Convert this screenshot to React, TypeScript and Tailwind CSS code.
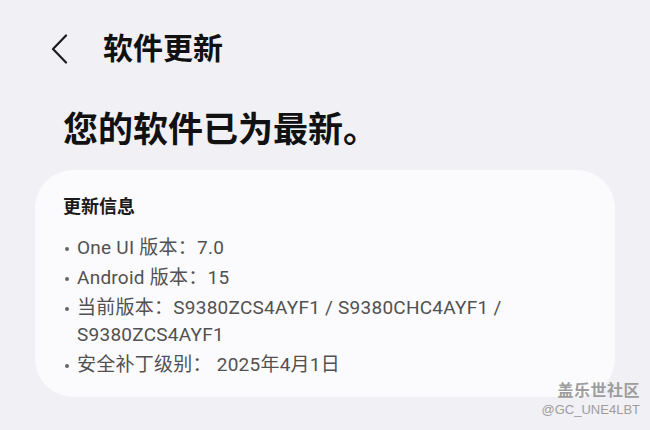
import React from 'react';

// Info rows shown inside the card
const infoRows: string[][] = [
  ['One UI 版本：7.0'],
  ['Android 版本：15'],
  ['当前版本：S9380ZCS4AYF1 / S9380CHC4AYF1 /', 'S9380ZCS4AYF1'],
  ['安全补丁级别： 2025年4月1日'],
];

function BackChevron() {
  return (
    <svg width="18" height="30" viewBox="0 0 18 30" fill="none">
      <path d="M16 1.5 L3 15 L16 28.5" stroke="#1c1c1e" strokeWidth="2.2" strokeLinecap="round" strokeLinejoin="round" />
    </svg>
  );
}

export default function App() {
  return (
    <div
      className="relative w-[650px] h-[430px] overflow-hidden bg-[#f0f0f5]"
      style={{ fontFamily: 'Roboto, "Noto Sans CJK SC", sans-serif' }}
    >
      {/* Top bar */}
      <div className="flex items-center pl-[50px] pt-[34px]">
        <BackChevron />
        <h1 className="ml-[35px] text-[30px] leading-[30px] font-bold text-[#111]">软件更新</h1>
      </div>

      {/* Status headline */}
      <h2 className="mt-[49px] ml-[63px] text-[35px] leading-[35px] font-bold text-[#111]">
        您的软件已为最新。
      </h2>

      {/* Update info card */}
      <div className="mt-[22px] ml-[35px] w-[580px] rounded-[38px] bg-[#fbfbfd] pt-[28px] pl-[28px] pr-[24px] pb-[19px]">
        <div className="text-[18px] leading-[18px] font-bold text-[#1a1a1a]">更新信息</div>
        <div className="mt-[18px] flex flex-col gap-[3px]">
          {infoRows.map((lines, i) => (
            <div key={i} className="flex items-start text-[19px] leading-[27px] tracking-[0.25px] text-[#515151]">
              <span className="mt-[13px] ml-[2px] mr-[8px] h-[4px] w-[4px] shrink-0 rounded-full bg-[#666]" />
              <div>
                {lines.map((l, j) => (
                  <div key={j}>{l}</div>
                ))}
              </div>
            </div>
          ))}
        </div>
      </div>

      {/* Watermark */}
      <div className="absolute right-[10px] top-[380px] flex flex-col items-end text-[#9d9d9d]">
        <span className="text-[16px] leading-[19px] font-bold tracking-[0.5px]" style={{ fontFamily: '"Noto Sans CJK SC", sans-serif' }}>盖乐世社区</span>
        <span className="mt-[3px] text-[13px] leading-[16px]" style={{ fontFamily: '"Liberation Sans", sans-serif' }}>@GC_UNE4LBT</span>
      </div>
    </div>
  );
}
